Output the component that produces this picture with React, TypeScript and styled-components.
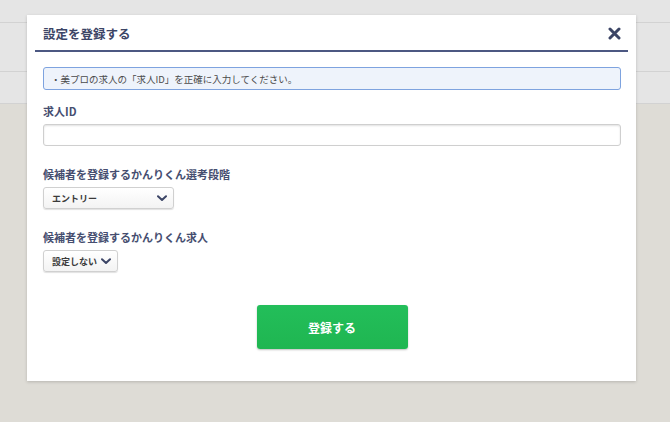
import { useState } from 'react';
import styled, { createGlobalStyle } from 'styled-components';

const GlobalStyle = createGlobalStyle`
  html, body {
    margin: 0;
    padding: 0;
    background: #dedcd6;
    font-family: "Noto Sans CJK JP", "Noto Sans", sans-serif;
  }
`;

const Page = styled.div`
  position: relative;
  width: 670px;
  height: 422px;
  overflow: hidden;
  background: #dedcd6;
`;

const Band = styled.div<{ $h: number }>`
  height: ${({ $h }) => $h}px;
  background: #e5e5e5;
  border-bottom: 1px solid #d2d2d2;
`;

const Modal = styled.div`
  position: absolute;
  left: 27px;
  top: 15px;
  width: 609px;
  height: 366px;
  box-sizing: border-box;
  background: #fff;
  box-shadow: 0 1px 3px rgba(0, 0, 0, 0.18);
  padding: 0 8px;
`;

const Header = styled.div`
  display: flex;
  align-items: center;
  justify-content: space-between;
  height: 33px;
  padding: 2px 7px 0 8px;
  border-bottom: 2px solid #4c5882;
`;

const Title = styled.h2`
  margin: 0;
  font-size: 12.5px;
  font-weight: 700;
  color: #3c4566;
`;

const Close = styled.button`
  border: none;
  background: none;
  padding: 0;
  display: flex;
  cursor: pointer;
`;

const Body = styled.div`
  padding: 15px 7px 0 8px;
  display: flex;
  flex-direction: column;
`;

const Notice = styled.div`
  height: 23px;
  box-sizing: border-box;
  display: flex;
  align-items: center;
  padding: 0 7px;
  background: #eef3fb;
  border: 1px solid #7ea3df;
  border-radius: 3px;
  font-size: 9.5px;
  color: #4a4a4a;
`;

const Field = styled.div<{ $top: number }>`
  display: flex;
  flex-direction: column;
  align-items: flex-start;
  margin-top: ${({ $top }) => $top}px;
`;

const Label = styled.label`
  font-size: 11px;
  font-weight: 700;
  color: #464e70;
  line-height: 14px;
  margin-bottom: 6px;
`;

const TextInput = styled.input`
  width: 100%;
  height: 22px;
  box-sizing: border-box;
  border: 1px solid #cfcfcf;
  border-radius: 3px;
  box-shadow: inset 0 1px 2px rgba(0, 0, 0, 0.12);
  outline: none;
`;

const SelectBox = styled.div<{ $w: number }>`
  width: ${({ $w }) => $w}px;
  height: 22px;
  box-sizing: border-box;
  display: flex;
  align-items: center;
  justify-content: space-between;
  padding: 0 6px 0 8px;
  border: 1px solid #d0d0d0;
  border-radius: 3px;
  background: linear-gradient(#ffffff, #f3f3f3);
  box-shadow: 0 1px 1px rgba(0, 0, 0, 0.12);
  font-size: 9px;
  font-weight: 700;
  color: #3a3a3a;
`;

const Actions = styled.div`
  display: flex;
  justify-content: center;
  margin-top: 33px;
`;

const Submit = styled.button`
  width: 151px;
  height: 44px;
  border: none;
  border-radius: 3px;
  background: linear-gradient(#23be5a, #1fb651);
  box-shadow: 0 1px 2px rgba(0, 0, 0, 0.25);
  color: #fff;
  font-family: inherit;
  font-size: 12px;
  font-weight: 700;
  cursor: pointer;
`;

const Chevron = () => (
  <svg width="10" height="7" viewBox="0 0 10 7">
    <path d="M1 1.2 L5 5 L9 1.2" fill="none" stroke="#3c4566" strokeWidth="2" strokeLinecap="round" strokeLinejoin="round" />
  </svg>
);

export default function App() {
  const [jobId, setJobId] = useState('');

  return (
    <>
      <GlobalStyle />
      <Page>
        <Band $h={22} />
        <Band $h={48} />
        <Band $h={31} />
        <Modal>
          <Header>
            <Title>設定を登録する</Title>
            <Close aria-label="close">
              <svg width="13" height="13" viewBox="0 0 13 13">
                <path d="M2 2 L11 11 M11 2 L2 11" stroke="#3c4566" strokeWidth="3" strokeLinecap="round" />
              </svg>
            </Close>
          </Header>
          <Body>
            <Notice>・美プロの求人の「求人ID」を正確に入力してください。</Notice>
            <Field $top={14}>
              <Label>求人ID</Label>
              <TextInput value={jobId} onChange={(e) => setJobId(e.target.value)} />
            </Field>
            <Field $top={21}>
              <Label>候補者を登録するかんりくん選考段階</Label>
              <SelectBox $w={131}>
                エントリー
                <Chevron />
              </SelectBox>
            </Field>
            <Field $top={21}>
              <Label>候補者を登録するかんりくん求人</Label>
              <SelectBox $w={75}>
                設定しない
                <Chevron />
              </SelectBox>
            </Field>
            <Actions>
              <Submit>登録する</Submit>
            </Actions>
          </Body>
        </Modal>
      </Page>
    </>
  );
}
